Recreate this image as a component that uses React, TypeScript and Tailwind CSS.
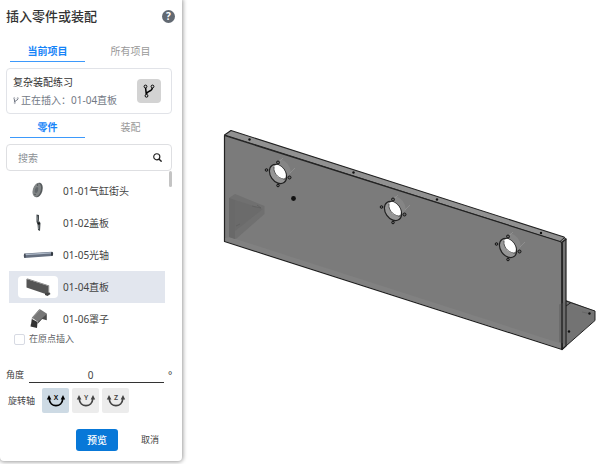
import { useState } from "react";

const parts = [
  { name: "01-01气缸街头", shape: "disc" },
  { name: "01-02盖板", shape: "cover" },
  { name: "01-05光轴", shape: "shaft" },
  { name: "01-04直板", shape: "plate" },
  { name: "01-06罩子", shape: "hood" },
];

const holes = [
  { x: 278, y: 174 },
  { x: 393, y: 211 },
  { x: 508, y: 248 },
];

const PartThumb = ({ shape }: { shape: string }) => (
  <svg viewBox="0 0 40 22" className="w-10 h-[22px]" aria-hidden="true">
    {shape === "disc" && (
      <g>
        <ellipse cx="20" cy="10" rx="4.5" ry="7.5" fill="#555a5c" transform="rotate(16 20 10)" />
        <ellipse cx="18.8" cy="10" rx="4" ry="7" fill="#818586" transform="rotate(16 18.8 10)" />
        <ellipse cx="18.5" cy="10" rx="1.6" ry="3" fill="#62676a" transform="rotate(16 18.5 10)" />
        <circle cx="19.5" cy="5" r=".7" fill="#44494b" />
        <circle cx="17" cy="14.5" r=".7" fill="#44494b" />
      </g>
    )}
    {shape === "cover" && (
      <g>
        <path d="M18.5 2.5 21 3v6l1.5 2-.5 8-2-1-.5-6-1-2Z" fill="#41474a" />
        <path d="m19 4 1 5 1 2-.5 6" stroke="#969da1" strokeWidth=".7" fill="none" />
        <circle cx="20.8" cy="11.5" r="1.2" fill="#17191a" />
      </g>
    )}
    {shape === "shaft" && (
      <g>
        <path d="M6.5 9.5 34 7.8c1.5 0 1.5 4 0 4.2L6.5 14Z" fill="#667080" />
        <path d="m7 10.6 26-1.8" stroke="#aeb9c8" strokeWidth="1.2" />
        <ellipse cx="6.8" cy="11.7" rx="1" ry="2.2" fill="#474e5a" />
        <ellipse cx="34" cy="9.9" rx="1" ry="2" fill="#30343b" />
      </g>
    )}
    {shape === "plate" && (
      <g>
        <path d="M8.5 3 30.5 10v9L8.5 11.5Z" fill="#555" />
        <path d="m8.500 3 1-.5 21.700 7v9l-.7.5V10Z" fill="#777" />
        <path d="m27 17 4.500-.5 1 1.500-3 2-2.500-1Z" fill="#444" />
      </g>
    )}
    {shape === "hood" && (
      <g>
        <path d="m14.5 10 8-8.5 6.5 4.200-8.300 8.800Z" fill="#777" />
        <path d="m14 11 5.500 3-.5 6-6.500-1.500Z" fill="#333" />
        <path d="m19.500 14.500 9.300-8.700v6.500l-2.800-.8-2-.5-4.500 5Z" fill="#4b4b4b" />
        <path d="m14.500 10 8-8.500-1.200-.3-7.300 8.300-1.500 9Z" fill="#707070" />
      </g>
    )}
  </svg>
);

type BranchIconProps = {
  className: string;
  weight?: number;
};

const BranchIcon = ({ className, weight = 1.5 }: BranchIconProps) => (
  <svg viewBox="0 0 12 14" className={className} fill="none" stroke="currentColor" aria-hidden="true">
    <circle cx="2.5" cy="2.5" r="1.4" />
    <circle cx="9.5" cy="2.5" r="1.4" />
    <circle cx="3.5" cy="11.8" r="1.4" />
    <path d="M2.600 4l.7 6.400M9.300 4c-.3 4.200-5.600 2.200-5.800 6" strokeWidth={weight} />
  </svg>
);

const AxisIcon = ({ axis }: { axis: string }) => (
  <svg viewBox="0 0 20 16" className="w-5 h-4" aria-hidden="true">
    <path d="M3.2 5.5c.5 9.5 13.100 9.5 13.600 0" fill="none" stroke="currentColor" strokeWidth="1.700" />
    <path d="M3 2 .8 6.500h4.600ZM17 2l-2.300 4.500h4.500Z" fill="currentColor" />
    <text x="10" y="7" textAnchor="middle" fontSize="7" fontWeight="600" fill="currentColor">
      {axis}
    </text>
  </svg>
);

type TabsProps = {
  labels: string[];
  active: number;
  onChange: (index: number) => void;
};

const Tabs = ({ labels, active, onChange }: TabsProps) => (
  <div className="grid grid-cols-[75px_1fr] ml-1" role="tablist">
    {labels.map((label, i) => (
      <button
        key={label}
        type="button"
        role="tab"
        aria-selected={active === i}
        onClick={() => onChange(i)}
        className={
          active === i
            ? "h-[22px] border-b border-[#3d99fb] text-[10px] leading-4 font-bold text-[#1684f8]"
            : "h-[22px] border-b border-transparent text-[10px] leading-4 text-[#999]"
        }
      >
        {label}
      </button>
    ))}
  </div>
);

const InsertPanel = () => {
  const [scope, setScope] = useState(0);
  const [kind, setKind] = useState(0);
  const [selected, setSelected] = useState("01-04直板");
  const [axis, setAxis] = useState("X");

  return (
    <form
      className="w-[182px] shrink-0 self-start rounded-b bg-white px-1.5 pt-1.5 pb-2.5
        shadow-[0_0_4px_1px_rgba(0,0,0,0.4)]"
      onSubmit={(e) => e.preventDefault()}
    >
      <div className="flex h-5 items-center justify-between pr-px">
        <h1 className="text-[13px] leading-5 font-medium text-[#333]">插入零件或装配</h1>
        <button
          type="button"
          aria-label="帮助"
          className="flex size-[13px] items-center justify-center rounded-full bg-[#626972]
            text-[10px] leading-3 font-bold text-white"
        >
          ?
        </button>
      </div>

      <div className="mt-3.5">
        <Tabs labels={["当前项目", "所有项目"]} active={scope} onChange={setScope} />
      </div>

      <div
        className="mt-1.5 mr-1 flex h-[46px] items-center justify-between rounded-sm border
          border-[#e1e3e8] pl-1.5 pr-2.5"
      >
        <div>
          <div className="text-[10px] leading-[18px] text-[#333]">复杂装配练习</div>
          <div className="flex items-center text-[10px] leading-[18px] text-[#737985]">
            <BranchIcon className="mr-0.5 h-[9px] w-1.5" weight={2} />
            <span>正在插入：</span>
            <span>01-04直板</span>
          </div>
        </div>
        <button
          type="button"
          aria-label="分支"
          className="flex size-6 items-center justify-center rounded-sm bg-[#d3d3d3] text-black"
        >
          <BranchIcon className="h-3.5 w-3" />
        </button>
      </div>

      <div className="mt-0.5">
        <Tabs labels={["零件", "装配"]} active={kind} onChange={setKind} />
      </div>

      <label className="mt-1.5 mr-1 flex h-[27px] items-center rounded-sm border border-[#dedfe2] pl-[11px] pr-[9px]">
        <input
          type="text"
          aria-label="搜索"
          placeholder="搜索"
          className="w-full min-w-0 text-[10px] leading-4 outline-none placeholder:text-[#8c9095]"
        />
        <svg viewBox="0 0 10 10" className="size-[9px] shrink-0 text-[#222]" aria-hidden="true">
          <circle cx="4.200" cy="4.200" r="3.400" fill="none" stroke="currentColor" strokeWidth="1.300" />
          <path d="m6.600 6.600 3 3" stroke="currentColor" strokeWidth="1.600" />
        </svg>
      </label>

      <div className="flex">
        <ul className="ml-[3px] flex-1 pt-1">
          {parts.map((part) => (
            <li key={part.name}>
              <button
                type="button"
                onClick={() => setSelected(part.name)}
                className={
                  selected === part.name
                    ? "flex h-8 w-full items-center bg-[#e2e6ee] pl-[9px] text-left"
                    : "flex h-8 w-full items-center pl-[9px] text-left"
                }
              >
                <span className="rounded-sm bg-white">
                  <PartThumb shape={part.shape} />
                </span>
                <span className="ml-[5px] text-[10px] leading-4 text-[#444]">{part.name}</span>
              </button>
            </li>
          ))}
        </ul>
        <div className="ml-1 mr-1 h-4 w-[3px] shrink-0 rounded-sm bg-[#c4c4c4]" />
      </div>

      <label className="ml-2 flex h-2 items-center text-[9px] leading-3 text-[#606266]">
        <input
          type="checkbox"
          className="mr-1 size-[11px] shrink-0 appearance-none rounded-xs border border-[#d7dae3]
            bg-white checked:bg-[#1684f8]"
        />
        在原点插入
      </label>

      <div className="mt-6 flex items-center text-[#444]">
        <label htmlFor="angle" className="w-[23px] shrink-0 text-[9px] leading-4">
          角度
        </label>
        <input
          id="angle"
          type="text"
          defaultValue="0"
          className="h-4 w-full min-w-0 border-b border-[#333] pr-3 text-center text-[10px] leading-4 outline-none"
        />
        <span className="w-3 shrink-0 pl-1 text-[10px] leading-4">°</span>
      </div>

      <div className="mt-[5px] flex items-center">
        <span className="w-9 shrink-0 pl-0.5 text-[9px] leading-4 text-[#444]">旋转轴</span>
        <div className="flex gap-[3px]" role="group" aria-label="旋转轴">
          {["X", "Y", "Z"].map((name) => (
            <button
              key={name}
              type="button"
              aria-pressed={axis === name}
              onClick={() => setAxis(name)}
              className={
                axis === name
                  ? "flex h-[25px] w-[27px] items-center justify-center rounded-xs bg-[#cddae4] text-black"
                  : "flex h-[25px] w-[27px] items-center justify-center rounded-xs bg-[#ececec] text-[#444]"
              }
            >
              <AxisIcon axis={name} />
            </button>
          ))}
        </div>
      </div>

      <div className="mt-4 flex justify-end gap-3.5 pr-2">
        <button
          type="submit"
          className="h-[22px] w-[42px] rounded-[3px] bg-[#0878d8] text-[10px] leading-4 font-medium text-white"
        >
          预览
        </button>
        <button type="button" className="h-[22px] w-9 text-[9px] leading-4 text-[#444]">
          取消
        </button>
      </div>
    </form>
  );
};

const ModelView = () => (
  <svg
    viewBox="182 0 418 464"
    className="min-w-0 flex-1"
    role="img"
    aria-label="01-04直板"
    strokeLinejoin="round"
  >
    {/* foot behind the plate */}
    <path d="M562 300.500 566 300 595 311v9l-33 29Z" fill="#777" />
    <path d="M566 304 595 313v7l-29 26Z" fill="#737373" />
    <path d="m566 301 29 10v9.500l-33 29M566 306l5-3.500" fill="none" stroke="#222" strokeWidth="1" />
    <path d="m582 312 7 1.500" stroke="#606060" strokeWidth=".7" />
    <circle cx="589.500" cy="313.500" r="1.200" fill="#111" />
    <circle cx="569" cy="331.500" r="1.200" fill="#111" />

    {/* top edge and right end */}
    <path d="M224.500 135 231 130.500 564 237l2 2.500-4 3Z" fill="#919191" stroke="#222" strokeWidth="1.100" />
    <path d="M562 242.500 566 239v107l-4 3.500Z" fill="#747474" stroke="#222" strokeWidth="1.200" />

    {/* front face */}
    <path d="M224.500 135.500 560 241.500q2 .5 2 3v105L224.500 241.500Z" fill="#7b7b7b" stroke="#222" strokeWidth="1.200" />
    <path d="m225.500 238 4-1L561 343.500v5L225.500 241Z" fill="#818181" />
    <path d="M559 304.500 565 302v42l-6-2Z" fill="#696969" opacity=".8" />
    <path d="M562 243v106" stroke="#222" strokeWidth="1.300" />
    <path d="m560 241.500 4-3.500" stroke="#222" strokeWidth="1" />

    {/* gusset seen through the plate */}
    <path d="m229 198 6-4 29.500 12v8L236 239l-7-2Z" fill="#707070" />
    <path d="m229 198 6 2v39l-6-2Z" fill="#696969" />
    <path d="m235 200 28 9-28 22Z" fill="#6b6b6b" />
    <path d="m252 206 9 2-4-3M236 226l4-2" stroke="#5b5b5b" strokeWidth=".6" fill="none" />

    {holes.map((hole) => (
      <g key={hole.x} transform={`translate(${hole.x} ${hole.y})`}>
        <path d="M-5-9 2-15q10 3 11 14l-7 8" fill="#858585" />
        <path d="m1-12 4-4M12-1l5-5" stroke="#969696" strokeWidth=".7" />
        <ellipse rx="7.500" ry="10.500" fill="#969696" stroke="#222" strokeWidth="1.200" transform="rotate(-35)" />
        <ellipse cx="1.800" cy="-2" rx="4.800" ry="8" fill="#fff" transform="rotate(-35 1.800 -2)" />
        <path d="M-4-7C-5 0 2 6 8 5" fill="none" stroke="#333" strokeWidth=".8" />
        <g fill="#666" stroke="#151515" strokeWidth="1">
          <circle cy="-11.500" r="1.500" />
          <circle cx="-11.500" cy="-4" r="1.300" />
          <circle cx="11.500" cy="3.500" r="1.500" />
          <circle cy="11.500" r="1.300" />
        </g>
      </g>
    ))}

    <g fill="#111">
      <circle cx="293.500" cy="198.500" r="2.400" />
      <circle cx="249.500" cy="139.500" r="1.200" />
      <circle cx="353.500" cy="172.500" r="1.200" />
      <circle cx="437" cy="199.500" r="1.200" />
      <circle cx="541" cy="233" r="1.200" />
    </g>
  </svg>
);

export default function App() {
  return (
    <main className="flex min-h-screen bg-white font-['Noto_Sans','Noto_Sans_CJK_SC',sans-serif]">
      <InsertPanel />
      <ModelView />
    </main>
  );
}
